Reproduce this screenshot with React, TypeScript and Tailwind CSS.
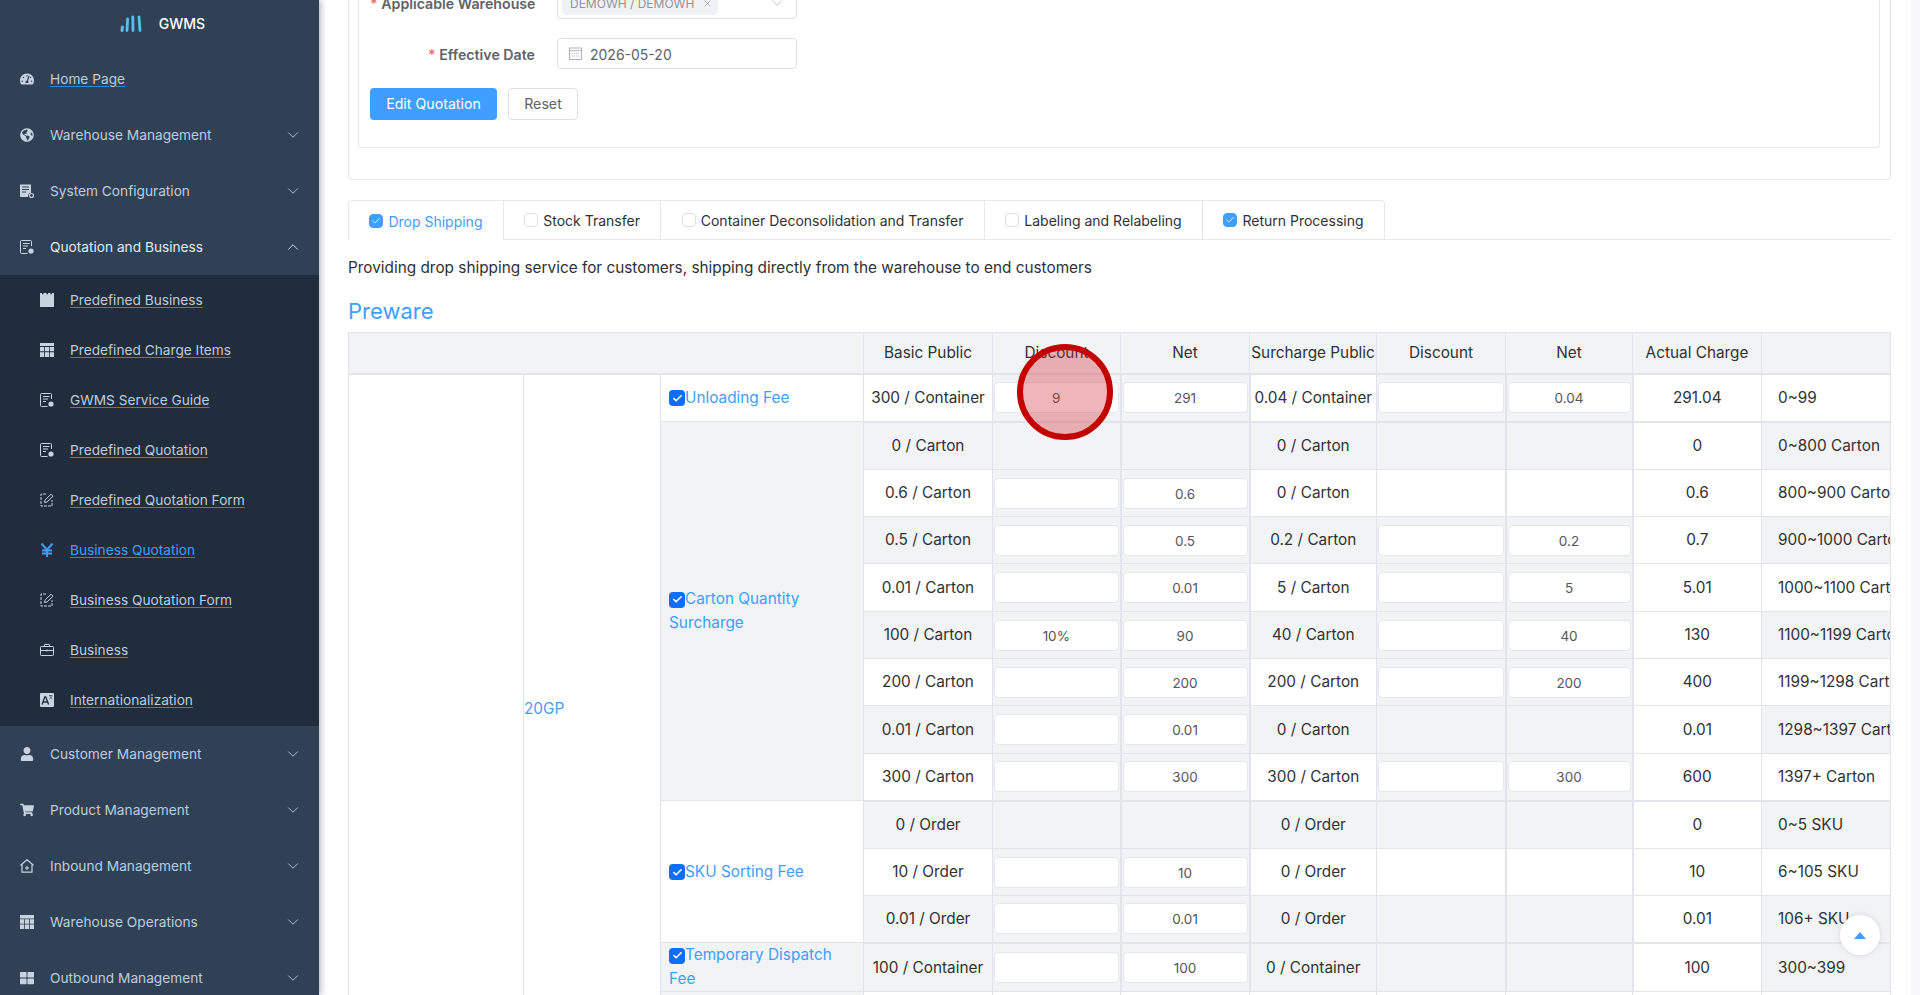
import React from "react";
import { ChevronDown, ChevronUp, Check, X } from "lucide-react";
import { FaTachometerAlt, FaGlobeAmericas, FaUser, FaShoppingCart, FaThLarge } from "react-icons/fa";

const DocPerson = () => (
  <svg viewBox="0 0 14 14" className="w-3.5 h-3.5" fill="none" stroke="currentColor" strokeWidth="1">
    <path d="M11.5 6V1.5a1 1 0 0 0-1-1h-9a1 1 0 0 0-1 1v11a1 1 0 0 0 1 1h6" />
    <path d="M3 3.5h6.5M3 6h5M3 8.5h3" />
    <circle cx="11" cy="11" r="2.6" fill="currentColor" stroke="none" />
  </svg>
);
const DocServer = () => (
  <svg viewBox="0 0 14 14" className="w-3.5 h-3.5" fill="currentColor">
    <path d="M0 .5h11v8.2a4 4 0 0 0-3 4.3H1a1 1 0 0 1-1-1z" />
    <path d="M2 3h7M2 5.5h7M2 8h4" stroke="#304156" strokeWidth="1" />
    <circle cx="11.5" cy="11.5" r="2" fill="none" stroke="currentColor" strokeWidth="1.2" />
  </svg>
);
const CalendarFill = () => (
  <svg viewBox="0 0 14 14" className="w-3.5 h-3.5" fill="currentColor">
    <path d="M0 0h2v1.2h1.5V0h3v1.2H8V0h2.5v1.2H12V0h2v14H0z" />
  </svg>
);
const TableFill = () => (
  <svg viewBox="0 0 14 14" className="w-3.5 h-3.5" fill="currentColor">
    <path d="M0 0h14v3H0zM0 4h4.2v4.3H0zM5 4h4v4.3H5zM9.8 4H14v4.3H9.8zM0 9.2h4.2V14H0zM5 9.2h4V14H5zM9.8 9.2H14V14H9.8z" />
  </svg>
);
const EditBox = () => (
  <svg viewBox="0 0 14 14" className="w-3.5 h-3.5" fill="none" stroke="currentColor" strokeWidth="1">
    <path d="M6 1H1v12h11V7" strokeDasharray="3 1" />
    <path d="M4.5 9.5l.6-2.5L11 1.2l2 2L7 9z" />
  </svg>
);
const Briefcase = () => (
  <svg viewBox="0 0 14 14" className="w-3.5 h-3.5" fill="none" stroke="currentColor" strokeWidth="1">
    <rect x="0.5" y="3.5" width="13" height="9" rx="0.8" />
    <path d="M4.5 3.5V2a.6.6 0 0 1 .6-.6h3.8a.6.6 0 0 1 .6.6v1.5M.5 7.5h13M7 6.5v2" />
  </svg>
);
const Translate = () => (
  <svg viewBox="0 0 14 14" className="w-3.5 h-3.5">
    <rect width="14" height="14" rx="1" fill="currentColor" />
    <path d="M2 11.5L4.8 4h1l2.8 7.5M3.2 9h4.2" fill="none" stroke="#1f2d3d" strokeWidth="1.3" />
    <path d="M9 2.5h3.5M10.7 2.5v1M9.5 6.2l2.7-3M9.8 3.5l2.5 2.7" fill="none" stroke="#1f2d3d" strokeWidth="0.6" />
  </svg>
);
const HousePlus = () => (
  <svg viewBox="0 0 14 14" className="w-3.5 h-3.5" fill="none" stroke="currentColor" strokeWidth="1.2">
    <path d="M.5 6.2L7 .8l6.5 5.4M2 5.2v8h10v-8M5 9h4M7 7v4" />
  </svg>
);
const OpsTable = () => (
  <svg viewBox="0 0 14 14" className="w-3.5 h-3.5" fill="currentColor">
    <path d="M0 0h14v3.4H0zM0 4.2h4.2V8.8H0zM5 4.2h4V8.8H5zM9.8 4.2H14V8.8H9.8zM0 9.6h4.2V14H0zM5 9.6h4V14H5zM9.8 9.6H14V14H9.8z" />
  </svg>
);
const Yen = () => (
  <svg viewBox="0 0 14 14" className="w-3.5 h-3.5" fill="none" stroke="currentColor" strokeWidth="2">
    <path d="M1.5 0.5L7 7l5.5-6.5M7 7v7M2 7.5h10M2 10.5h10" />
  </svg>
);

const Logo = () => (
  <svg viewBox="0 0 22 17" className="w-[22px] h-[17px]" fill="none" stroke="#5cbbf0" strokeLinecap="round">
    <path d="M2 15.5l.4-3.5" strokeWidth="3" />
    <path d="M7 15.5l.6-11.5" strokeWidth="2.8" />
    <path d="M13 15.5L12.8 2" strokeWidth="2.8" />
    <path d="M20 15.5L19 2" strokeWidth="2.8" />
  </svg>
);

const TopItem = ({ icon, label, open, arrow = true, link }: { icon: React.ReactNode; label: string; open?: boolean; arrow?: boolean; link?: boolean }) => (
  <div className={`flex h-14 items-center pl-5 pr-[17px] text-[13.7px] ${open ? "text-[#e4e9f0]" : "text-[#bfcbd9]"}`}>
    <span className="flex w-3.5 h-3.5 items-center justify-center text-[#c9d3df]">{icon}</span>
    <span className={`ml-4 flex-1 ${link ? "underline underline-offset-2 decoration-[#3b82c4]" : ""}`}>{label}</span>
    {arrow && (open ? <ChevronUp size={18} strokeWidth={1.2} /> : <ChevronDown size={18} strokeWidth={1.2} />)}
  </div>
);

const SubItem = ({ icon, label, active }: { icon: React.ReactNode; label: string; active?: boolean }) => (
  <div className={`flex h-[50px] items-center pl-10 text-[13.7px] ${active ? "text-[#409eff]" : "text-[#bfcbd9]"}`}>
    <span className={`flex w-3.5 h-3.5 items-center justify-center ${active ? "text-[#409eff]" : "text-[#c9d3df]"}`}>{icon}</span>
    <span className="ml-4 underline underline-offset-2 decoration-[#3b82c4]">{label}</span>
  </div>
);

const Sidebar = () => (
  <aside className="w-[319px] shrink-0 h-full overflow-hidden bg-[#304156] shadow-[2px_0_6px_rgba(0,21,41,0.3)] z-10">
    <div className="flex h-[51px] items-center justify-center gap-[17px] pb-[5px] pl-[6px]">
      <Logo />
      <span className="text-[14px] font-medium text-white">GWMS</span>
    </div>
    <TopItem icon={<FaTachometerAlt size={14} />} label="Home Page" arrow={false} link />
    <TopItem icon={<FaGlobeAmericas size={14} />} label="Warehouse Management" />
    <TopItem icon={<DocServer />} label="System Configuration" />
    <TopItem icon={<DocPerson />} label="Quotation and Business" open />
    <div className="bg-[#1f2d3d] pb-px">
      <SubItem icon={<CalendarFill />} label="Predefined Business" />
      <SubItem icon={<TableFill />} label="Predefined Charge Items" />
      <SubItem icon={<DocPerson />} label="GWMS Service Guide" />
      <SubItem icon={<DocPerson />} label="Predefined Quotation" />
      <SubItem icon={<EditBox />} label="Predefined Quotation Form" />
      <SubItem icon={<Yen />} label="Business Quotation" active />
      <SubItem icon={<EditBox />} label="Business Quotation Form" />
      <SubItem icon={<Briefcase />} label="Business" />
      <SubItem icon={<Translate />} label="Internationalization" />
    </div>
    <TopItem icon={<FaUser size={14} />} label="Customer Management" />
    <TopItem icon={<FaShoppingCart size={14} />} label="Product Management" />
    <TopItem icon={<HousePlus />} label="Inbound Management" />
    <TopItem icon={<OpsTable />} label="Warehouse Operations" />
    <TopItem icon={<FaThLarge size={14} />} label="Outbound Management" />
  </aside>
);

const tabs = [
  { name: "Drop Shipping", on: true, active: true },
  { name: "Stock Transfer" },
  { name: "Container Deconsolidation and Transfer" },
  { name: "Labeling and Relabeling" },
  { name: "Return Processing", on: true },
];

const Tabs = () => (
  <div className="mt-[20px] flex h-10 border-b border-[#e4e7ed] text-[14px]">
    <div className="flex h-10 rounded-t border border-[#e4e7ed] border-b-0">
      {tabs.map((t, i) => (
        <div
          key={t.name}
          className={`flex items-center gap-[5px] px-[20.4px] ${i > 0 ? "border-l border-[#e4e7ed] border-b" : ""} ${t.active ? "bg-white h-10 text-[#409eff]" : "text-[#303133]"}`}
        >
          <span className={`flex w-3.5 h-3.5 items-center justify-center rounded-sm border ${t.on ? "bg-[#409eff] border-[#409eff]" : "bg-white border-[#dcdfe6]"}`}>
            {t.on && <Check size={10} strokeWidth={2} className="text-white" />}
          </span>
          {t.name}
        </div>
      ))}
    </div>
  </div>
);

type Row = {
  base: string; d1: string | null; n1: string | null; sur: string; d2: string | null; n2: string | null; actual: string; range: string; gray: boolean; h?: string;
};

const rows: Row[] = [
  { base: "300 / Container", d1: "9", n1: "291", sur: "0.04 / Container", d2: "", n2: "0.04", actual: "291.04", range: "0~99", gray: false, h: "h-[48px]" },
  { base: "0 / Carton", d1: null, n1: null, sur: "0 / Carton", d2: null, n2: null, actual: "0", range: "0~800 Carton", gray: true, h: "h-[48px]" },
  { base: "0.6 / Carton", d1: "", n1: "0.6", sur: "0 / Carton", d2: null, n2: null, actual: "0.6", range: "800~900 Carton", gray: false },
  { base: "0.5 / Carton", d1: "", n1: "0.5", sur: "0.2 / Carton", d2: "", n2: "0.2", actual: "0.7", range: "900~1000 Carton", gray: true },
  { base: "0.01 / Carton", d1: "", n1: "0.01", sur: "5 / Carton", d2: "", n2: "5", actual: "5.01", range: "1000~1100 Carton", gray: false, h: "h-[48px]" },
  { base: "100 / Carton", d1: "10%", n1: "90", sur: "40 / Carton", d2: "", n2: "40", actual: "130", range: "1100~1199 Carton", gray: true },
  { base: "200 / Carton", d1: "", n1: "200", sur: "200 / Carton", d2: "", n2: "200", actual: "400", range: "1199~1298 Carton", gray: false },
  { base: "0.01 / Carton", d1: "", n1: "0.01", sur: "0 / Carton", d2: null, n2: null, actual: "0.01", range: "1298~1397 Carton", gray: true, h: "h-[48px]" },
  { base: "300 / Carton", d1: "", n1: "300", sur: "300 / Carton", d2: "", n2: "300", actual: "600", range: "1397+ Carton", gray: false },
  { base: "0 / Order", d1: null, n1: null, sur: "0 / Order", d2: null, n2: null, actual: "0", range: "0~5 SKU", gray: true, h: "h-[48px]" },
  { base: "10 / Order", d1: "", n1: "10", sur: "0 / Order", d2: null, n2: null, actual: "10", range: "6~105 SKU", gray: false },
  { base: "0.01 / Order", d1: "", n1: "0.01", sur: "0 / Order", d2: null, n2: null, actual: "0.01", range: "106+ SKU", gray: true },
  { base: "100 / Container", d1: "", n1: "100", sur: "0 / Container", d2: null, n2: null, actual: "100", range: "300~399", gray: true, h: "h-[49px]" },
];

// name cells keyed by the row they start on
const names: Record<number, { label: string; span: number; gray: boolean }> = {
  0: { label: "Unloading Fee", span: 1, gray: false },
  1: { label: "Carton Quantity Surcharge", span: 8, gray: true },
  9: { label: "SKU Sorting Fee", span: 3, gray: false },
  12: { label: "Temporary Dispatch Fee", span: 1, gray: true },
};

const td = "border border-[#e1e4ea] text-center";
const thickCol = "border-x-2";

const Blue = () => (
  <span className="inline-flex w-4 h-4 align-[-1px] items-center justify-center rounded-[4px] bg-[#0d6efd]">
    <Check size={11} strokeWidth={3.5} className="text-white" />
  </span>
);

const PriceInput = ({ value }: { value: string }) => (
  <input
    readOnly
    value={value}
    className="block w-[calc(100%-2px)] mx-auto h-[31px] rounded-[4px] border border-[#e4e7ed] bg-white pt-px text-center text-[13.5px] text-[#54565a] outline-none"
  />
);

const InputCell = ({ value, stripe, extra = "" }: { value: string | null; stripe: string; extra?: string }) =>
  value === null ? <td className={`${td} ${extra} ${stripe}`} /> : <td className={`${td} ${extra} bg-[#f2f3f4]`}><PriceInput value={value} /></td>;

const PriceTable = () => (
  <div className="mt-[5px] w-[1543px] overflow-hidden border-r border-[#e1e4ea]">
    <table className="table-fixed w-[1673px] text-[15.35px] text-[#303133]">
      <colgroup>
        <col className="w-[175px]" />
        <col className="w-[137px]" />
        <col className="w-[203px]" />
        <col className="w-[129px]" />
        <col className="w-[128px]" />
        <col className="w-[129px]" />
        <col className="w-[127px]" />
        <col className="w-[129px]" />
        <col className="w-[127px]" />
        <col className="w-[129px]" />
        <col className="w-[260px]" />
      </colgroup>
      <thead>
        <tr className="h-[41px] bg-[#f2f3f4]">
          <th colSpan={3} className={`${td} border-b-2`} />
          {["Basic Public", "Discount", "Net", "Surcharge Public", "Discount", "Net", "Actual Charge", ""].map((h, i) => (
            <th key={i} className={`${td} border-b-2 font-normal whitespace-nowrap`}>{h}</th>
          ))}
        </tr>
      </thead>
      <tbody>
        {rows.map((r, i) => {
          const stripe = r.gray ? "bg-[#f2f3f4]" : "bg-white";
          const n = names[i];
          const top = i === 1 || i === 9 || i === 12 ? "border-t-2" : "";
          return (
            <tr key={i} className={r.h ?? "h-[47px]"}>
              {i === 0 && <td rowSpan={14} className={`${td} bg-white`} />}
              {i === 0 && <td rowSpan={14} className={`${td} bg-white text-left text-[#409eff]`}>20GP</td>}
              {n && (
                <td rowSpan={n.span} className={`${td} ${n.gray ? "bg-[#f2f3f4]" : "bg-white"} pl-[8px] pr-[20px] text-left leading-6 text-[#409eff]`}>
                  <Blue />
                  {n.label}
                </td>
              )}
              <td className={`${td} ${top} ${stripe} whitespace-nowrap`}>{r.base}</td>
              <InputCell value={r.d1} stripe={stripe} extra={top} />
              <InputCell value={r.n1} stripe={stripe} extra={`${top} ${thickCol}`} />
              <td className={`${td} ${top} ${stripe} whitespace-nowrap`}>{r.sur}</td>
              <InputCell value={r.d2} stripe={stripe} extra={top} />
              <InputCell value={r.n2} stripe={stripe} extra={`${top} ${thickCol}`} />
              <td className={`${td} ${top} bg-white`}>{r.actual}</td>
              <td className={`${td} ${top} ${stripe} pl-4 text-left whitespace-nowrap`}>{r.range}</td>
            </tr>
          );
        })}
        <tr className="h-[51px]">
          <td className={`${td} bg-[#f2f3f4]`} />
          {Array.from({ length: 8 }).map((_, i) => (
            <td key={i} className={`${td} bg-white`} />
          ))}
        </tr>
      </tbody>
    </table>
  </div>
);

const QuotationForm = () => (
  <div className="rounded border border-[#e4e7ed] border-t-0 pb-[31px] pl-[9px] pr-[10px]">
    <div className="rounded border border-[#e4e7ed] border-t-0 pb-[27px] pl-[11px]">
      <div className="flex h-[32px] items-center">
        <label className="w-[187px] shrink-0 whitespace-nowrap pr-[22px] pt-[2px] text-right text-[14.2px] font-semibold text-[#606266]">
          <span className="text-[#f56c6c]">*</span> Applicable Warehouse
        </label>
        <div className="flex h-[32px] w-[240px] items-center rounded border border-[#dcdfe6] pl-[4px] pr-[10px]">
          <span className="flex h-6 w-[156px] items-center gap-[8px] rounded bg-[#f0f2f5] pl-[8px] pt-px text-xs text-[#909399]">
            DEMOWH / DEMOWH <X size={11} strokeWidth={1.5} />
          </span>
          <ChevronDown size={18} strokeWidth={1} className="ml-auto text-[#a8abb2]" />
        </div>
      </div>
      <div className="mt-[19px] flex h-[31px] items-center">
        <label className="w-[187px] shrink-0 whitespace-nowrap pr-[22px] pt-[2px] text-right text-[14.2px] font-semibold text-[#606266]">
          <span className="text-[#f56c6c]">*</span> Effective Date
        </label>
        <div className="flex h-[31px] w-[240px] items-center rounded border border-[#dcdfe6] pl-[11px] text-sm text-[#606266]">
          <svg viewBox="0 0 13 13" className="w-[13px] h-[13px] text-[#a8abb2]" fill="none" stroke="currentColor" strokeWidth="0.9">
            <rect x="0.5" y="1" width="12" height="11.5" />
            <path d="M.5 3.7h12" />
            <path d="M3 6.3h7M3 9h7" strokeDasharray="1 1" />
          </svg>
          <span className="ml-[8px] pt-[2px]">2026-05-20</span>
        </div>
      </div>
      <div className="mt-[19px] flex gap-[11px] text-[14.2px]">
        <button className="h-[32px] w-[127px] rounded-[4px] bg-[#409eff] text-white">Edit Quotation</button>
        <button className="h-[32px] w-[70px] rounded-[4px] border border-[#dcdfe6] bg-white text-[#606266]">Reset</button>
      </div>
    </div>
  </div>
);

const Main = () => (
  <main className="flex-1 h-full overflow-hidden bg-white pl-[29px]">
    <div className="flex h-full">
      <div className="-mt-[13px] w-[1543px]">
        <QuotationForm />
        <Tabs />
        <p className="mt-[18px] text-[15.35px] leading-5 text-[#303133]">
          Providing drop shipping service for customers, shipping directly from the warehouse to end customers
        </p>
        <h2 className="mt-[17px] text-[22px] leading-8 text-[#409eff]">Preware</h2>
        <PriceTable />
      </div>
      <div className="ml-[20px] w-[9px] h-full bg-[#f7f8fa]" />
    </div>
  </main>
);

export default function App() {
  return (
    <div className="relative flex h-[995px] w-[1920px] overflow-hidden [font-family:Inter,sans-serif]">
      <Sidebar />
      <Main />
      {/* click marker from the recording */}
      <div className="absolute left-[1017px] top-[344px] w-24 h-24 rounded-full border-[6px] border-[#c40000] bg-[rgba(210,30,40,0.33)]" />
      <div className="absolute left-[1840px] top-[915px] flex w-10 h-10 items-center justify-center rounded-full bg-white shadow-[0_0_6px_rgba(0,0,0,0.12)]">
        <span className="h-0 w-0 border-x-[6px] border-b-[7px] border-x-transparent border-b-[#409eff]" />
      </div>
    </div>
  );
}
